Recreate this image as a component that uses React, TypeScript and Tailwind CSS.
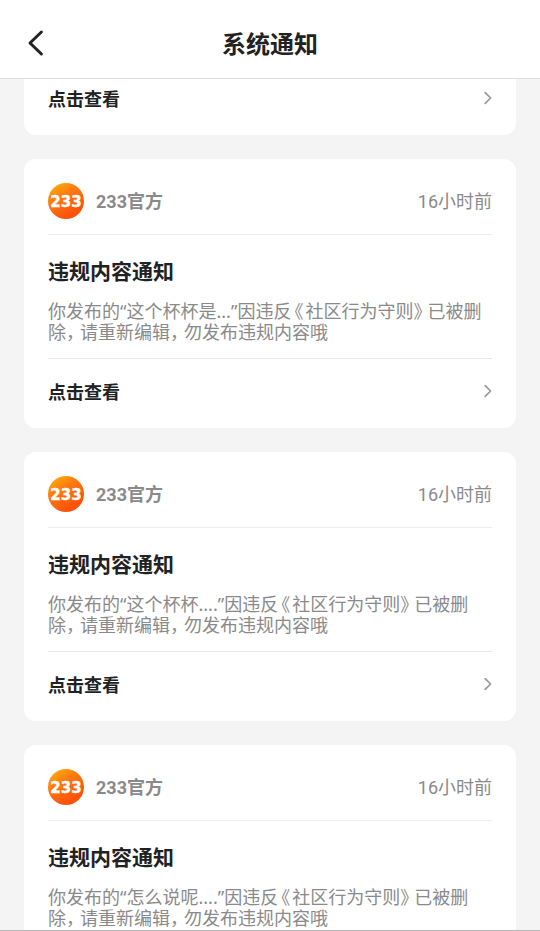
type Notice = {
  id: number;
  quote: string;
};

const notices: Notice[] = [
  { id: 1, quote: '这个杯杯是...' },
  { id: 2, quote: '这个杯杯....' },
  { id: 3, quote: '怎么说呢....' },
];

function BackIcon() {
  return (
    <svg width="24" height="28" viewBox="0 0 24 28" fill="none" aria-hidden="true">
      <path
        d="M17.4 3 6 14l11.4 11"
        stroke="#222"
        strokeWidth="3"
        strokeLinecap="round"
        strokeLinejoin="round"
      />
    </svg>
  );
}

function ChevronIcon() {
  return (
    <svg width="9" height="18" viewBox="0 0 9 18" fill="none" aria-hidden="true">
      <path d="m2.2 1.6 5.4 5.4-5.4 5.4" stroke="#999" strokeWidth="1.7" strokeLinecap="round" strokeLinejoin="round" />
    </svg>
  );
}

function OfficialLogo() {
  return (
    <svg width="36" height="36" viewBox="0 0 36 36" aria-hidden="true">
      <defs>
        <linearGradient id="official-logo" x1="0.1" y1="0.1" x2="0.6" y2="0.9">
          <stop offset="0" stopColor="#ffa90a" />
          <stop offset="0.4" stopColor="#ff7a10" />
          <stop offset="1" stopColor="#fb520c" />
        </linearGradient>
      </defs>
      <circle cx="18" cy="18" r="18" fill="url(#official-logo)" />
      <text
        x="18"
        y="23.5"
        textAnchor="middle"
        fill="#fff"
        stroke="#fff"
        strokeWidth="0.4"
        fontFamily="'DejaVu Sans', sans-serif"
        fontSize="15"
        fontWeight="700"
      >
        233
      </text>
    </svg>
  );
}

function ViewLink() {
  return (
    <a href="#detail" className="flex h-[69px] items-center justify-between pb-0.5 text-lg font-bold text-[#222]">
      <span>点击查看</span>
      <ChevronIcon />
    </a>
  );
}

function Comma() {
  return <span className="mr-[5px]">，</span>;
}

function NoticeCard({ quote }: { quote: string }) {
  return (
    <article className="rounded-xl bg-white px-6 pt-6">
      <header className="flex items-center justify-between border-b border-[#ededed] pb-[15px] text-lg text-[#8a8a8a]">
        <div className="flex items-center gap-3">
          <OfficialLogo />
          <span className="pt-0.5 font-bold">233官方</span>
        </div>
        <time className="pt-0.5">16小时前</time>
      </header>

      <div className="border-b border-[#e8e8e8] pt-6 pb-[15px]">
        <h2 className="text-[21px] leading-[26px] font-bold text-[#222]">违规内容通知</h2>
        <p className="mt-4 font-['Noto_Sans','Noto_Sans_CJK_SC',sans-serif] text-lg leading-[21px] text-[#8a8a8a] [font-feature-settings:'halt']">
          你发布的“{quote}”因违反
          <span className="mr-0.5 ml-[3px]">《</span>
          社区行为守则
          <span className="mr-[5px]">》</span>
          已被删除
          <Comma />
          请重新编辑
          <Comma />
          勿发布违规内容哦
        </p>
      </div>

      <ViewLink />
    </article>
  );
}

export default function App() {
  return (
    <div className="flex h-screen flex-col border-b border-[#b5b5b5] bg-[#f4f4f4] font-[Roboto,'Noto_Sans_CJK_SC',sans-serif]">
      <header className="grid h-[79px] shrink-0 grid-cols-[1fr_auto_1fr] items-center border-b border-[#dedede] bg-white px-6 pt-2">
        <button type="button" aria-label="返回" className="justify-self-start">
          <BackIcon />
        </button>
        <h1 className="pt-1 text-2xl font-bold text-[#222]">系统通知</h1>
      </header>

      <main className="flex min-h-0 flex-1 flex-col overflow-y-auto px-6 [scrollbar-width:none]">
        <div className="-mt-[13px] rounded-b-xl bg-white px-6">
          <ViewLink />
        </div>
        <div className="flex flex-col gap-6 py-6">
          {notices.map((notice) => (
            <NoticeCard key={notice.id} quote={notice.quote} />
          ))}
        </div>
      </main>
    </div>
  );
}
